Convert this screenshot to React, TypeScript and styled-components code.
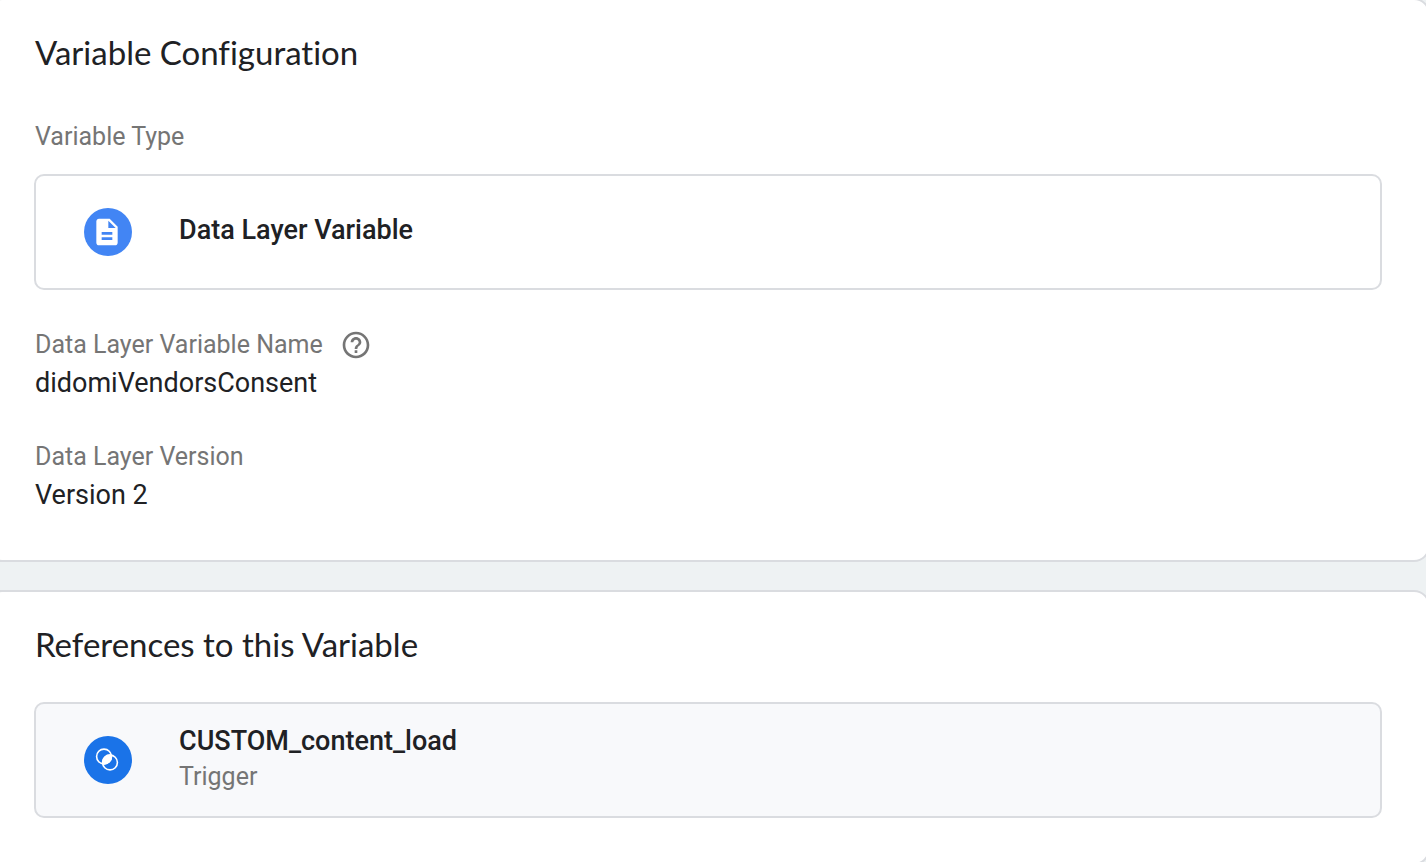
import React from "react";
import styled, { createGlobalStyle } from "styled-components";

const GlobalStyle = createGlobalStyle`
  *, *::before, *::after { box-sizing: border-box; }
  body {
    margin: 0;
    background: #eef2f3;
    color: #202124;
    font-family: Roboto, "Liberation Sans", sans-serif;
  }
`;

const Page = styled.main`
  display: flex;
  flex-direction: column;
  gap: 28px;
  min-height: 100vh;
  max-height: 100vh;
  overflow: hidden;
`;

const Card = styled.section`
  flex: none;
  margin: 0 -4px 0 -14px;
  padding: 31px 46px 45px;
  border: 2px solid #dadce0;
  border-radius: 16px;
  background: #fff;

  &:first-child {
    margin-top: -2px;
  }
`;

const Title = styled.h2`
  margin: 0;
  padding-left: 1px;
  font-family: Lato, "Liberation Sans", sans-serif;
  font-size: 33px;
  font-weight: 400;
  font-variant-ligatures: no-common-ligatures;
  line-height: 42px;
`;

const TypeLabel = styled.div`
  margin: 48px 0 21px;
  padding-left: 1px;
  color: #757575;
  font-size: 25px;
  line-height: 32px;
`;

const Box = styled.div`
  display: flex;
  align-items: center;
  gap: 47px;
  min-height: 116px;
  padding: 0 48px;
  border: 2px solid #dadce0;
  border-radius: 10px;
  background: #fff;
`;

const ReferenceLink = styled.a`
  display: flex;
  align-items: center;
  gap: 47px;
  min-height: 116px;
  margin-top: 37px;
  padding: 0 48px;
  border: 2px solid #dadce0;
  border-radius: 10px;
  background: #f8f9fb;
  color: inherit;
  text-decoration: none;
`;

const Badge = styled.span<{ $color: string }>`
  display: flex;
  align-items: center;
  justify-content: center;
  flex: none;
  width: 48px;
  height: 48px;
  padding-right: 2px;
  border-radius: 50%;
  background: ${(p) => p.$color};
`;

const ItemText = styled.div`
  display: flex;
  flex-direction: column;
  padding-bottom: 4px;
`;

const ItemName = styled.span`
  font-size: 27px;
  font-weight: 500;
  line-height: 38px;
`;

const ItemKind = styled.span`
  color: #757575;
  font-size: 25px;
  line-height: 34px;
`;

const Fields = styled.dl`
  display: flex;
  flex-direction: column;
  gap: 36px;
  margin: 37px 0 0;
  padding-left: 1px;
`;

const Label = styled.dt`
  display: flex;
  align-items: center;
  gap: 17px;
  color: #757575;
  font-size: 25px;
  line-height: 36px;
`;

const Value = styled.dd`
  margin: 0;
  font-size: 27px;
  line-height: 40px;
`;

const HelpButton = styled.button`
  display: flex;
  padding: 0;
  border: 0;
  background: none;
  color: #757575;
  cursor: pointer;
`;

const DocumentIcon = () => (
  <svg width="32" height="32" viewBox="0 0 24 24" fill="#fff" aria-hidden="true">
    <path d="M14 2H6c-1.100 0-1.990.9-1.990 2L4 20c0 1.100.89 2 1.990 2H18c1.100 0 2-.9 2-2V8l-6-6zm2 16H8v-2h8v2zm0-4H8v-2h8v2zm-3-5V3.500L18.500 9H13z" />
  </svg>
);

const TriggerIcon = () => (
  <svg width="24" height="24" viewBox="0 0 24 24" aria-hidden="true">
    <g fill="none" stroke="#fff" strokeWidth="1.600">
      <circle cx="9" cy="8.500" r="7.400" />
      <circle cx="15" cy="14.500" r="7.400" />
    </g>
    <path
      d="M16.290 7.210A7.400 7.400 0 0 1 7.710 15.790A7.400 7.400 0 0 1 16.290 7.210Z"
      fill="#fff"
      stroke="#fff"
      strokeWidth="1.600"
    />
  </svg>
);

const HelpIcon = () => (
  <svg width="32" height="32" viewBox="0 0 24 24" fill="currentColor" aria-hidden="true">
    <path d="M11 18h2v-2h-2v2zm1-16C6.480 2 2 6.480 2 12s4.480 10 10 10 10-4.480 10-10S17.520 2 12 2zm0 18c-4.410 0-8-3.590-8-8s3.590-8 8-8 8 3.590 8 8-3.590 8-8 8zm0-14c-2.210 0-4 1.790-4 4h2c0-1.100.9-2 2-2s2 .9 2 2c0 2-3 1.750-3 5h2c0-2.250 3-2.500 3-5 0-2.210-1.790-4-4-4z" />
  </svg>
);

export default function App() {
  return (
    <>
      <GlobalStyle />
      <Page>
        <Card>
          <Title>Variable Configuration</Title>
          <TypeLabel>Variable Type</TypeLabel>
          <Box>
            <Badge $color="#4285f4">
              <DocumentIcon />
            </Badge>
            <ItemText>
              <ItemName>Data Layer Variable</ItemName>
            </ItemText>
          </Box>
          <Fields>
            <div>
              <Label>
                Data Layer Variable Name
                <HelpButton type="button" aria-label="Help">
                  <HelpIcon />
                </HelpButton>
              </Label>
              <Value>didomiVendorsConsent</Value>
            </div>
            <div>
              <Label>Data Layer Version</Label>
              <Value>Version 2</Value>
            </div>
          </Fields>
        </Card>
        <Card>
          <Title>References to this Variable</Title>
          <ReferenceLink href="#trigger">
            <Badge $color="#1a73e8">
              <TriggerIcon />
            </Badge>
            <ItemText>
              <ItemName>CUSTOM_content_load</ItemName>
              <ItemKind>Trigger</ItemKind>
            </ItemText>
          </ReferenceLink>
        </Card>
      </Page>
    </>
  );
}
